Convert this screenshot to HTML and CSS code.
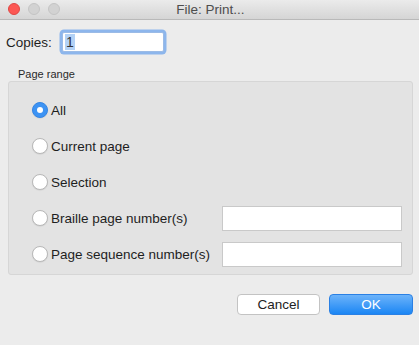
FILE: index.html
```html
<!DOCTYPE html>
<html lang="en">
<head>
    <meta charset="UTF-8">
    <meta name="viewport" content="width=device-width, initial-scale=1.0">
    <title>File: Print...</title>
    <link rel="stylesheet" href="styles.css">
</head>
<body>
    <div class="window">
        <!-- Title bar with window buttons -->
        <div class="titlebar">
            <div class="lights">
                <span class="light red"></span>
                <span class="light"></span>
                <span class="light"></span>
            </div>
            <div class="title">File: Print...</div>
        </div>

        <div class="content">
            <!-- Copies -->
            <div class="copies">
                <label class="copies-label">Copies:</label>
                <div class="focus-ring"><span class="selected">1</span></div>
            </div>

            <!-- Page range group -->
            <div class="group-title">Page range</div>
            <div class="group">
                <div class="row">
                    <span class="radio checked"></span>
                    <span class="row-label">All</span>
                </div>
                <div class="row">
                    <span class="radio"></span>
                    <span class="row-label">Current page</span>
                </div>
                <div class="row">
                    <span class="radio"></span>
                    <span class="row-label">Selection</span>
                </div>
                <div class="row">
                    <span class="radio"></span>
                    <span class="row-label">Braille page number(s)</span>
                    <span class="field"></span>
                </div>
                <div class="row">
                    <span class="radio"></span>
                    <span class="row-label">Page sequence number(s)</span>
                    <span class="field"></span>
                </div>
            </div>

            <!-- Dialog buttons -->
            <div class="buttons">
                <button class="btn cancel">Cancel</button>
                <button class="btn ok">OK</button>
            </div>
        </div>
    </div>
</body>
</html>
```

FILE: styles.css
```css
body {
    margin: 0;
    background-color: #ececec;
    font-family: "Liberation Sans", Arial, sans-serif;
    font-size: 13.5px;
    color: #1e1e1e;
    overflow: hidden;
}

.window {
    width: 419px;
    height: 345px;
    background-color: #ececec;
}

/* Title bar */
.titlebar {
    position: relative;
    height: 19px;
    background: linear-gradient(#ebebeb, #d5d5d5);
    border-bottom: 1px solid #b9b9b9;
    display: flex;
    align-items: center;
    justify-content: center;
}

.lights {
    position: absolute;
    left: 8px;
    top: 3px;
    display: flex;
    gap: 8px;
}

.light {
    width: 12px;
    height: 12px;
    border-radius: 50%;
    box-sizing: border-box;
    background-color: #d2d2d2;
    border: 1px solid #c4c4c4;
}

.light.red {
    background-color: #fc5753;
    border-color: #df4744;
}

.title {
    font-size: 13.5px;
    color: #4d4d4d;
    padding-left: 2px;
}

.content {
    padding: 0 6px 0 8px;
}

/* Copies row */
.copies {
    display: flex;
    align-items: center;
    margin-top: 10px;
    height: 24px;
}

.copies-label {
    margin-left: -2px;
    width: 55px;
}

.focus-ring {
    width: 98px;
    height: 18px;
    margin-left: 1px;
    background-color: #fff;
    border: 1px solid #9bbbe6;
    box-shadow: 0 0 0 2.5px #8db6ec;
    border-radius: 2px;
    display: flex;
    align-items: center;
    padding-left: 2px;
}

.selected {
    background-color: #b3d2f6;
    padding: 0 1px;
    line-height: 16px;
    font-size: 14px;
    color: #333;
}

/* Group box */
.group-title {
    font-size: 11px;
    line-height: 13px;
    margin-top: 14px;
    padding-left: 10px;
    color: #2a2a2a;
}

.group {
    background-color: #e3e3e3;
    border: 1px solid #d6d6d6;
    border-radius: 3px;
    padding: 10px 0 2px;
}

.row {
    display: flex;
    align-items: center;
    height: 36px;
    padding-left: 23px;
}

.radio {
    width: 16px;
    height: 16px;
    box-sizing: border-box;
    border-radius: 50%;
    background-color: #fff;
    border: 1px solid #b8b8b8;
    box-shadow: 0 0.5px 1px rgba(0, 0, 0, 0.1);
    margin-right: 3px;
}

.radio.checked {
    background-color: #3d93f3;
    border-color: #3486e6;
    display: flex;
    align-items: center;
    justify-content: center;
}

.radio.checked::after {
    content: "";
    width: 6px;
    height: 6px;
    border-radius: 50%;
    background-color: #fff;
}

.row-label {
    flex: 1;
}

.field {
    width: 178px;
    height: 23px;
    background-color: #fff;
    border: 1px solid #c9c9c9;
    margin-right: 10px;
}

/* Buttons */
.buttons {
    display: flex;
    justify-content: flex-end;
    gap: 9px;
    margin-top: 19px;
}

.btn {
    height: 21px;
    border-radius: 4px;
    font-family: "Liberation Sans", Arial, sans-serif;
    font-size: 13.5px;
    padding: 0;
}

.cancel {
    width: 83px;
    background-color: #fff;
    border: 1px solid #c3c3c3;
    color: #222;
}

.ok {
    width: 84px;
    background: linear-gradient(#6cb3fa, #1b86f4);
    border: 1px solid #2a80e4;
    color: #fff;
}
```
